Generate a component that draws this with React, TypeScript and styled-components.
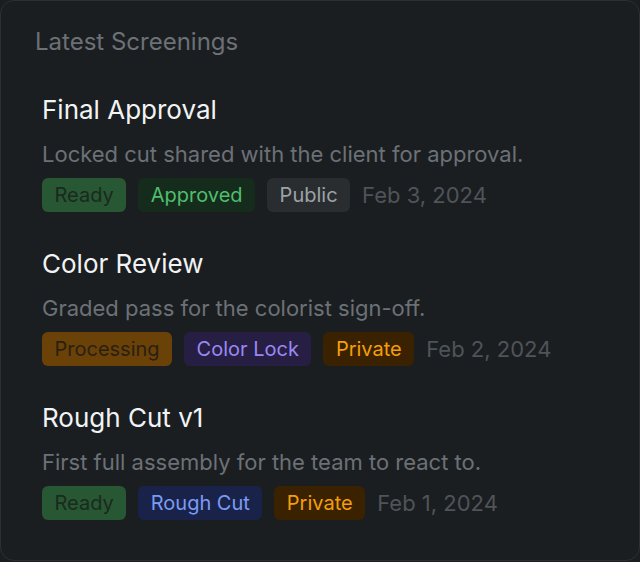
import React from 'react';
import styled, { createGlobalStyle } from 'styled-components';

const GlobalStyle = createGlobalStyle`
  html, body {
    margin: 0;
    padding: 0;
    background: #1b1e20;
  }
  body {
    font-family: Inter, "Noto Sans", sans-serif;
  }
`;

const Card = styled.section`
  box-sizing: border-box;
  width: 640px;
  height: 561px;
  background: #1b1e20;
  border: 1px solid #2d3033;
  border-radius: 14px;
  padding: 27px 33px;
`;

const Header = styled.h2`
  margin: 0 0 0 1px;
  font-size: 24px;
  line-height: 28px;
  font-weight: 400;
  color: #6b7177;
`;

const List = styled.div`
  display: flex;
  flex-direction: column;
  gap: 36px;
  margin-top: 38px;
  padding-left: 8px;
`;

const Item = styled.div`
  display: flex;
  flex-direction: column;
`;

const Title = styled.div`
  font-size: 26px;
  line-height: 32px;
  font-weight: 400;
  color: #f1f3f5;
`;

const Desc = styled.div`
  margin-top: 14px;
  font-size: 22px;
  line-height: 28px;
  color: #6b7177;
`;

const Meta = styled.div`
  display: flex;
  align-items: center;
  gap: 12px;
  margin-top: 10px;
`;

type Tone = 'ready' | 'approved' | 'public' | 'processing' | 'lock' | 'private' | 'rough';

const tones: Record<Tone, { bg: string; fg: string }> = {
  ready: { bg: '#285733', fg: '#1a2a1e' },
  approved: { bg: '#152c1d', fg: '#4fbf6c' },
  public: { bg: '#2a2d30', fg: '#9da2a7' },
  processing: { bg: '#6a4208', fg: '#2b2010' },
  lock: { bg: '#261f43', fg: '#9a88f3' },
  private: { bg: '#3a2200', fg: '#f49e0b' },
  rough: { bg: '#19234a', fg: '#7b9bf4' },
};

const Badge = styled.span<{ $tone: Tone }>`
  display: inline-flex;
  align-items: center;
  height: 34px;
  padding: 0 12.5px;
  border-radius: 6px;
  font-size: 20px;
  background: ${(p) => tones[p.$tone].bg};
  color: ${(p) => tones[p.$tone].fg};
`;

const DateText = styled.span`
  font-size: 22px;
  color: #4e5459;
`;

const screenings: { title: string; desc: string; tags: [string, Tone][]; date: string }[] = [
  {
    title: 'Final Approval',
    desc: 'Locked cut shared with the client for approval.',
    tags: [['Ready', 'ready'], ['Approved', 'approved'], ['Public', 'public']],
    date: 'Feb 3, 2024',
  },
  {
    title: 'Color Review',
    desc: 'Graded pass for the colorist sign-off.',
    tags: [['Processing', 'processing'], ['Color Lock', 'lock'], ['Private', 'private']],
    date: 'Feb 2, 2024',
  },
  {
    title: 'Rough Cut v1',
    desc: 'First full assembly for the team to react to.',
    tags: [['Ready', 'ready'], ['Rough Cut', 'rough'], ['Private', 'private']],
    date: 'Feb 1, 2024',
  },
];

export default function App() {
  return (
    <>
      <GlobalStyle />
      <Card>
        <Header>Latest Screenings</Header>
        <List>
          {screenings.map((s) => (
            <Item key={s.title}>
              <Title>{s.title}</Title>
              <Desc>{s.desc}</Desc>
              <Meta>
                {s.tags.map(([label, tone]) => (
                  <Badge key={label} $tone={tone}>
                    {label}
                  </Badge>
                ))}
                <DateText>{s.date}</DateText>
              </Meta>
            </Item>
          ))}
        </List>
      </Card>
    </>
  );
}
